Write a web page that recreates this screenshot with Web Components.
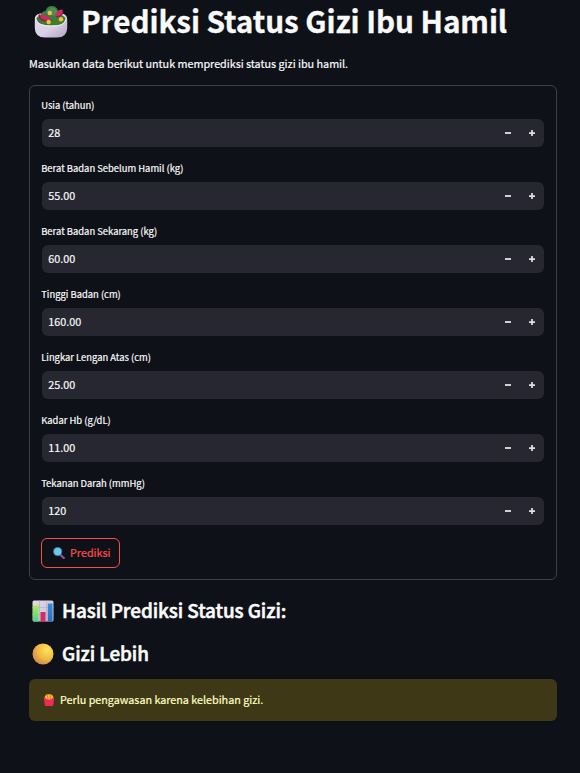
<!DOCTYPE html>
<html lang="id">
<head>
<meta charset="utf-8">
<title>Prediksi Status Gizi Ibu Hamil</title>
<style>
html,body{margin:0;background:#0e1117}
body{height:773px;overflow:hidden;color:#fafafa;font-family:"Noto Sans CJK SC","Noto Sans",sans-serif;font-size:10.8px;-webkit-text-stroke:.2px currentColor}
</style>
</head>
<body>
<gizi-app></gizi-app>
<script>
const icons={
salad:`<svg viewBox="0 0 34 34"><defs><linearGradient id="b" x1="0" x2="1" y2="1"><stop stop-color="#e3dced"/><stop offset=".55" stop-color="#d8d0e4"/><stop offset="1" stop-color="#b3a1c6"/></linearGradient></defs><path d="M.8 15Q.3 9.500 6 8.500H28Q33.500 9.500 33.200 15V23Q33 32.500 23 32.500H11Q1 32.500.8 23Z" fill="url(#b)"/><ellipse cx="17" cy="14.300" rx="14.600" ry="6.200" fill="#397a32"/><path d="M7 10Q8 6 11.500 6Q13 1 17.500 1Q23 1 24 6Q29 7 28 12Q23 17 17 15Q9 15 7 10Z" fill="#397d42"/><path d="M12 7Q16 1 21 3Q24 6 24 10Q16 12 12 7Z" fill="#4b8f51"/><path d="M5 9.500Q14 9 17.500 15.500Q7 19 5 9.500Z" fill="#c72b60"/><path d="M5 9.500Q6 18 17.500 15.500" fill="none" stroke="#8d204a" stroke-width="1.500"/><path d="M21 12Q22 4 28.500 4.500Q30 12 21 12Z" fill="#d02b62"/><path d="M22 12Q30 11 28.500 5" fill="none" stroke="#8e244d" stroke-width="1.300"/><path d="M5 16Q9 20 16 19L24 20Q31 19 31 15L26 13L17 17Z" fill="#417f27"/><g fill="#f3bf3e"><circle cx="15.800" cy="8" r="2.200"/><circle cx="27" cy="14.300" r="2.200"/><circle cx="14.700" cy="17" r="2.200"/></g><path d="M2 14Q4 22 17 21Q30 22 32 14" fill="none" stroke="#eee9f3" stroke-width="1"/></svg>`,
chart:`<svg viewBox="0 0 22 22"><defs><linearGradient id="w" y2="1"><stop stop-color="#e2dae9"/><stop offset="1" stop-color="#c6bdcf"/></linearGradient><linearGradient id="g" x2="0" y2="1"><stop stop-color="#aaf04a"/><stop offset="1" stop-color="#4ecf86"/></linearGradient><linearGradient id="u" x2="0" y2="1"><stop stop-color="#318ce1"/><stop offset="1" stop-color="#2b71be"/></linearGradient></defs><rect x=".5" y=".5" width="21" height="21" rx="1.500" fill="url(#w)"/><path d="M.5 7.500H21.500M.5 14.500H21.500M7.500.5V21M14.500.5V21" stroke="#b9adc7" stroke-width=".7"/><path d="M1 5.500H6.500V21.500H2Q1 21.500 1 20.500Z" fill="url(#g)"/><path d="M8.500 12H13.500V21.500H8.500Z" fill="#d72a67"/><path d="M15.800 3.500H20.500V21.500H15.800Z" fill="url(#u)"/></svg>`,
circle:`<svg viewBox="0 0 22 22"><defs><radialGradient id="r" cx=".7" cy=".3" r=".75"><stop stop-color="#ffe45b"/><stop offset=".6" stop-color="#eeba43"/><stop offset="1" stop-color="#d58c4c"/></radialGradient></defs><circle cx="11" cy="11" r="10.500" fill="url(#r)"/></svg>`,
search:`<svg viewBox="0 0 12 12"><path d="M7.500 8L10.800 11" stroke="#8b568f" stroke-width="2.300" stroke-linecap="round"/><circle cx="4.700" cy="4.600" r="4.100" fill="#68cbee" stroke="#466f91" stroke-width=".9"/></svg>`,
fries:`<svg viewBox="0 0 12 12"><path d="M1.500 3L3 .7L5 .3L7 .2L9 .7L10.500 3L9.500 7H2.500Z" fill="#f6b72e"/><path d="M4.200 1L5 6M7.700 1L7 6" stroke="#c66a31" stroke-width=".6"/><path d="M.8 3Q2.200 2.800 3 4.800Q6 6.700 9 4.800Q9.800 2.800 11.200 3L10.300 11Q10.200 12 9 12H3Q1.800 12 1.700 11Z" fill="#ed2a5b"/></svg>`
};
function define(name,render){
  customElements.define(name,class extends HTMLElement{
    connectedCallback(){this.attachShadow({mode:'open'}).innerHTML=render(this)}
  });
}
define('emoji-icon',e=>`<style>:host{display:block;flex:none}svg{display:block;width:100%;height:100%}</style>${icons[e.getAttribute('name')]}`);
define('page-heading',()=>`<style>:host{display:flex;align-items:center;white-space:nowrap;font-weight:700;-webkit-text-stroke:0}.text{padding-bottom:var(--lift,2px)}</style><slot name="icon"></slot><span class="text"><slot></slot></span>`);
define('number-field',e=>`<style>
:host{display:block;height:49px}
.label{height:15px;line-height:15px;font-size:9.42px;margin-bottom:6px;white-space:nowrap;padding-left:.2px}
.box{height:28px;margin-left:1px;background:#262730;border-radius:6px;display:flex;align-items:center;box-sizing:border-box;padding-left:6.200px}
.value{flex:1;line-height:26px;padding-bottom:2px}
button{all:unset;width:24px;height:28px;display:grid;place-items:center}
svg{display:block;width:8px;height:8px}
</style><div class="label">${e.getAttribute('label')}</div><div class="box"><span class="value">${e.getAttribute('value')}</span><button aria-label="Kurangi"><svg viewBox="0 0 8 8"><path d="M1 4H7" stroke="#d0d0d3" stroke-width="2"/></svg></button><button aria-label="Tambah"><svg viewBox="0 0 8 8"><path d="M1 4H7M4 1V7" stroke="#e0e0e3" stroke-width="1.750"/></svg></button></div>`);
define('predict-button',()=>`<style>
:host{display:flex;align-items:center;box-sizing:border-box;width:79px;height:30px;border:1px solid #ff4b4b;border-radius:6px;color:#ff4b4b;padding-left:11px}
.text{padding-bottom:2px}
emoji-icon{width:12px;height:12px;margin-right:5px}</style><emoji-icon name="search"></emoji-icon><span class="text"><slot></slot></span>`);
define('form-panel',()=>`<style>:host{display:flex;flex-direction:column;gap:14px;box-sizing:border-box;height:495px;border:1px solid #3d4045;border-radius:6px;padding:12px 12px 11px 11px}::slotted(predict-button){margin-top:-1px}</style><slot></slot>`);
define('alert-box',()=>`<style>:host{display:flex;align-items:center;box-sizing:border-box;height:42px;border-radius:6px;background:#3e3816;color:#ffffc2;padding-left:14px}.text{padding-bottom:2px;letter-spacing:-.02px}emoji-icon{width:12px;height:12px;margin-right:5px}</style><emoji-icon name="fries"></emoji-icon><span class="text"><slot></slot></span>`);
define('gizi-app',()=>`<style>
:host{display:block;padding:0 23px 0 29px}
.h1{--lift:4px;height:44px;font-size:29.7px;letter-spacing:-.07px;padding-left:5px;-webkit-text-stroke:.3px currentColor}
.h1 emoji-icon{width:34px;height:34px;margin:0 13px 0 0}
p{margin:10px 0 13px;height:18px;line-height:18px;letter-spacing:-.02px}
.h2{height:29px;font-size:18.9px;font-weight:500;letter-spacing:-.09px;-webkit-text-stroke:.55px currentColor;padding-left:3px}
.h2 emoji-icon{width:22px;height:22px;margin-right:8px}
.first{margin-top:16px}.second{margin-top:14px}
.h2 emoji-icon{margin-top:0}
alert-box{margin-top:11px}
</style>
<page-heading class="h1" role="heading" aria-level="1"><emoji-icon slot="icon" name="salad"></emoji-icon>Prediksi Status Gizi Ibu Hamil</page-heading>
<p>Masukkan data berikut untuk memprediksi status gizi ibu hamil.</p>
<form-panel>
<number-field label="Usia (tahun)" value="28"></number-field>
<number-field label="Berat Badan Sebelum Hamil (kg)" value="55.00"></number-field>
<number-field label="Berat Badan Sekarang (kg)" value="60.00"></number-field>
<number-field label="Tinggi Badan (cm)" value="160.00"></number-field>
<number-field label="Lingkar Lengan Atas (cm)" value="25.00"></number-field>
<number-field label="Kadar Hb (g/dL)" value="11.00"></number-field>
<number-field label="Tekanan Darah (mmHg)" value="120"></number-field>
<predict-button role="button">Prediksi</predict-button>
</form-panel>
<page-heading class="h2 first" role="heading" aria-level="2"><emoji-icon slot="icon" name="chart"></emoji-icon>Hasil Prediksi Status Gizi:</page-heading>
<page-heading class="h2 second" role="heading" aria-level="2"><emoji-icon slot="icon" name="circle"></emoji-icon>Gizi Lebih</page-heading>
<alert-box>Perlu pengawasan karena kelebihan gizi.</alert-box>`);
</script>
</body>
</html>
